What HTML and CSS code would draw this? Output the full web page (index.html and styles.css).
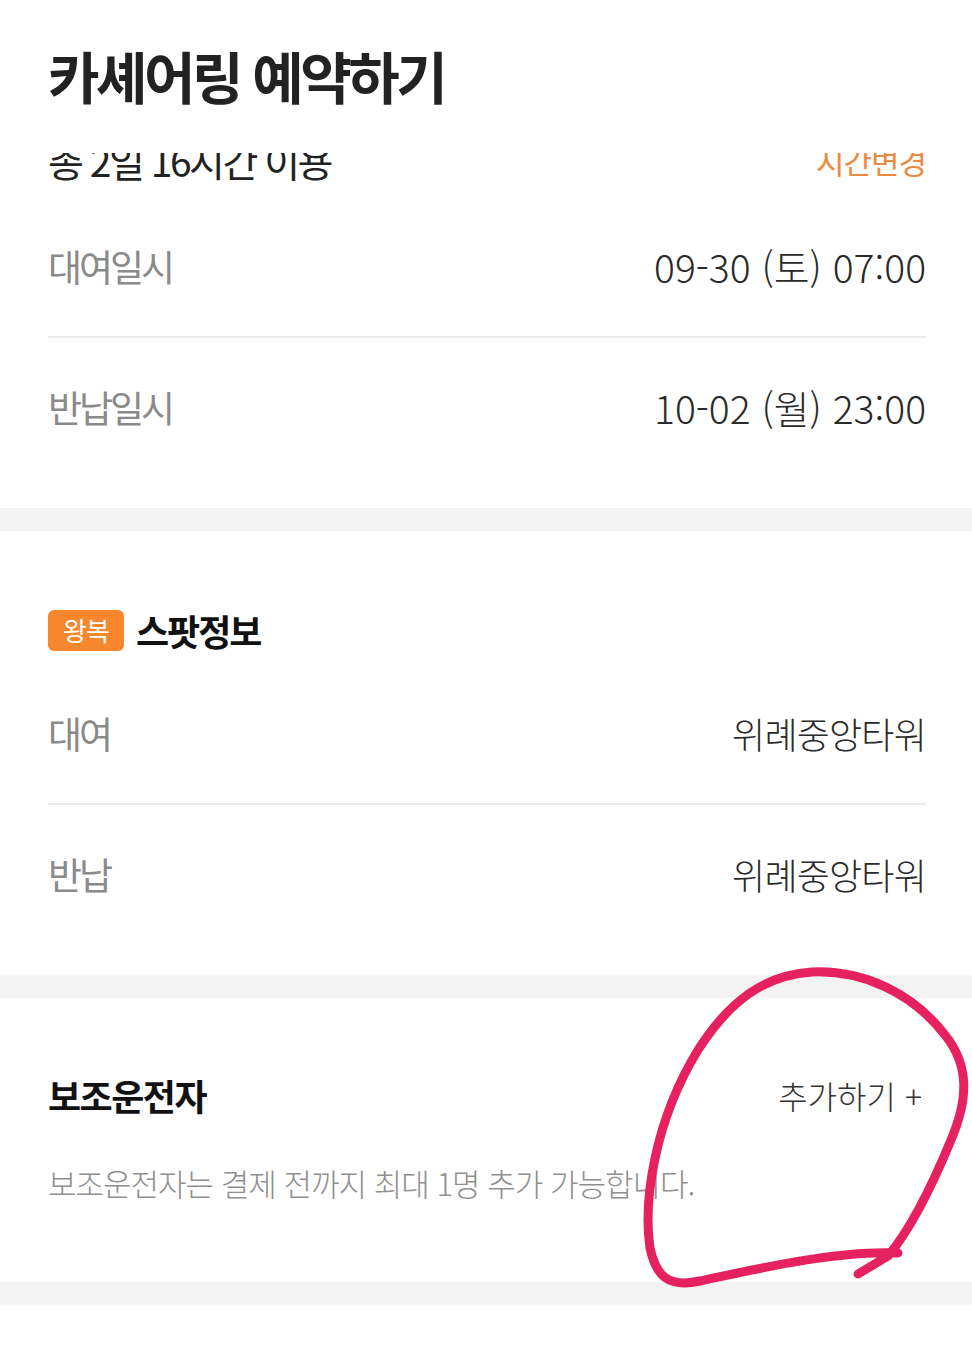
FILE: index.html
```html
<!DOCTYPE html>
<html lang="ko">
<head>
<meta charset="utf-8">
<title>카셰어링 예약하기</title>
<link rel="stylesheet" href="styles.css">
</head>
<body>
<div class="page">
  <header class="topbar">
    <h1 class="title">카셰어링 예약하기</h1>
  </header>

  <section class="section section-time">
    <div class="summary-clip">
      <div class="summary">
        <span class="summary-text">총 2일 16시간 이용</span>
        <span class="summary-link">시간변경</span>
      </div>
    </div>
    <div class="row">
      <span class="label">대여일시</span>
      <span class="value">09-30 (토) 07:00</span>
    </div>
    <div class="row">
      <span class="label">반납일시</span>
      <span class="value">10-02 (월) 23:00</span>
    </div>
  </section>

  <div class="band"></div>

  <section class="section section-spot">
    <div class="heading">
      <span class="badge">왕복</span>
      <span class="heading-text">스팟정보</span>
    </div>
    <div class="row">
      <span class="label">대여</span>
      <span class="value">위례중앙타워</span>
    </div>
    <div class="row">
      <span class="label">반납</span>
      <span class="value">위례중앙타워</span>
    </div>
  </section>

  <div class="band"></div>

  <section class="section section-driver">
    <div class="heading heading-split">
      <span class="heading-text">보조운전자</span>
      <span class="add-link">추가하기 +</span>
    </div>
    <p class="desc">보조운전자는 결제 전까지 최대 1명 추가 가능합니다.</p>
  </section>

  <div class="band"></div>

  <svg class="annotation" width="972" height="1371" viewBox="0 0 972 1371" aria-hidden="true">
    <path d="M 898 1253 C 840 1250, 760 1268, 700 1281 C 668 1288, 656 1276, 650 1248 C 643 1200, 655 1120, 698 1050 C 730 1000, 765 975, 812 972 C 862 970, 912 992, 945 1035 C 970 1066, 968 1100, 951 1140 C 932 1186, 910 1230, 888 1256 L 858 1274" fill="none" stroke="#e6215f" stroke-width="9" stroke-linecap="round" stroke-linejoin="round"/>
  </svg>
</div>
</body>
</html>
```

FILE: styles.css
```css
* { box-sizing: border-box; }

html, body {
  margin: 0;
  padding: 0;
  background: #ffffff;
}

body {
  font-family: "Noto Sans CJK KR", "Noto Sans", sans-serif;
  color: #222222;
}

.page {
  position: relative;
  width: 972px;
  min-height: 1371px;
  background: #ffffff;
}

.topbar {
  height: 150px;
  padding: 0 48px;
  display: flex;
  align-items: center;
  background: #ffffff;
}

.title {
  margin: 0;
  font-size: 56px;
  font-weight: 700;
  letter-spacing: -3.5px;
  color: #222222;
  line-height: 1;
}

.section {
  padding: 0 46px 32px 48px;
  background: #ffffff;
}

.summary-clip {
  margin-top: 3px;
  height: 28px;
  overflow: hidden;
  display: flex;
  align-items: flex-end;
  margin-bottom: 15px;
}

.summary {
  width: 100%;
  display: flex;
  justify-content: space-between;
  align-items: flex-end;
  margin-bottom: -7px;
}

.summary-text {
  font-size: 39px;
  line-height: 56px;
  letter-spacing: -2.5px;
  color: #222222;
}

.summary-link {
  font-size: 31px;
  line-height: 50px;
  letter-spacing: -1px;
  color: #e98b40;
  margin-bottom: 2px;
}

.row {
  height: 140px;
  display: flex;
  align-items: center;
  justify-content: space-between;
}

.row + .row {
  border-top: 2px solid #ebebeb;
}

.label {
  font-size: 37px;
  letter-spacing: -3px;
  color: #8a8a8a;
}

.value {
  font-size: 39px;
  font-weight: 300;
  letter-spacing: 0;
  color: #2a2a2a;
}

.section-spot .value {
  font-size: 36px;
  letter-spacing: -0.8px;
}

.band {
  height: 23px;
  background: #f3f3f3;
}

.section-spot {
  padding-top: 79px;
}

.heading {
  height: 40px;
  display: flex;
  align-items: center;
  gap: 12px;
  margin-bottom: 13px;
}

.badge {
  display: inline-flex;
  align-items: center;
  justify-content: center;
  width: 76px;
  height: 41px;
  border-radius: 6px;
  background: #f7862c;
  color: #ffffff;
  font-size: 26px;
  letter-spacing: -1px;
  line-height: 1;
}

.heading-text {
  font-size: 36px;
  font-weight: 700;
  letter-spacing: -2px;
  color: #111111;
}

.section-driver {
  padding-top: 75px;
  padding-bottom: 79px;
}

.heading-split {
  height: 44px;
  justify-content: space-between;
  margin: 0;
}

.heading-split .heading-text {
  letter-spacing: -1.5px;
}

.add-link {
  font-size: 32px;
  font-weight: 300;
  letter-spacing: 0;
  color: #333333;
  margin-right: 4px;
}

.desc {
  margin: 46px 0 0;
  height: 40px;
  line-height: 40px;
  font-size: 31px;
  font-weight: 300;
  letter-spacing: -1px;
  color: #8f8f8f;
}

.annotation {
  position: absolute;
  left: 0;
  top: 0;
  pointer-events: none;
}
```
